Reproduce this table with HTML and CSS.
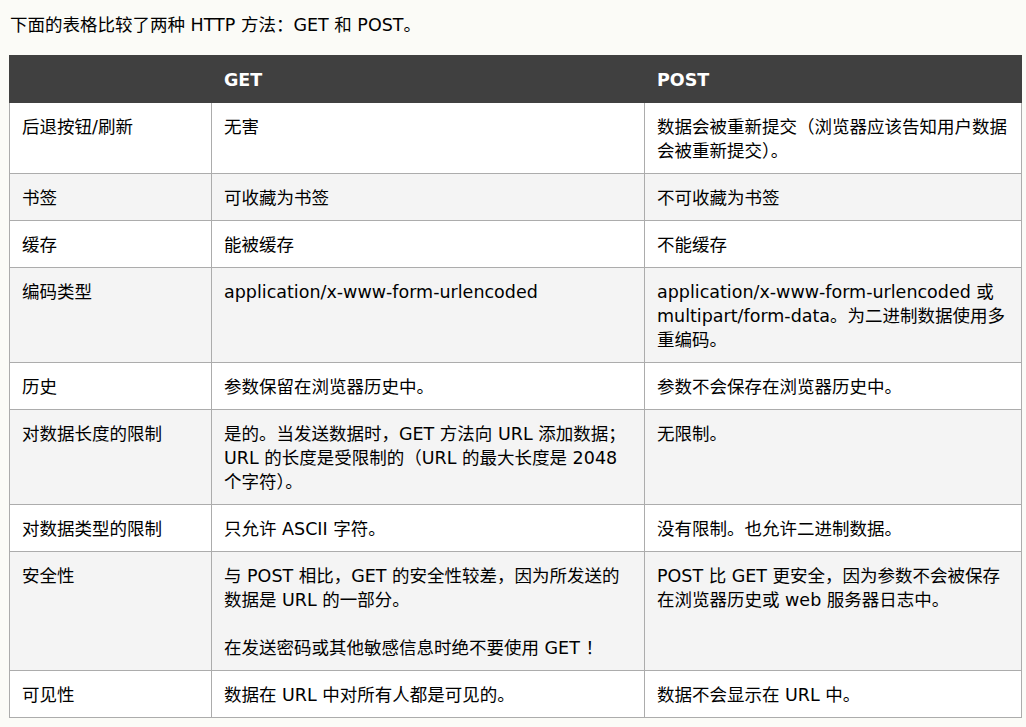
FILE: index.html
```html
<!DOCTYPE html>
<html lang="zh-CN">
<head>
<meta charset="utf-8">
<title>GET 对比 POST</title>
<link rel="stylesheet" href="styles.css">
</head>
<body>
<main class="page">
  <p class="intro">下面的表格比较了两种 HTTP 方法：GET 和 POST。</p>
  <table class="compare">
    <colgroup>
      <col class="c-name">
      <col class="c-get">
      <col class="c-post">
    </colgroup>
    <thead>
      <tr><th></th><th>GET</th><th>POST</th></tr>
    </thead>
    <tbody>
      <tr><td>后退按钮/刷新</td><td>无害</td><td>数据会被重新提交（浏览器应该告知用户数据会被重新提交）。</td></tr>
      <tr><td>书签</td><td>可收藏为书签</td><td>不可收藏为书签</td></tr>
      <tr><td>缓存</td><td>能被缓存</td><td>不能缓存</td></tr>
      <tr><td>编码类型</td><td>application/x-www-form-urlencoded</td><td>application/x-www-form-urlencoded 或 multipart/form-data。为二进制数据使用多重编码。</td></tr>
      <tr><td>历史</td><td>参数保留在浏览器历史中。</td><td>参数不会保存在浏览器历史中。</td></tr>
      <tr><td>对数据长度的限制</td><td>是的。当发送数据时，GET 方法向 URL 添加数据；URL 的长度是受限制的（URL 的最大长度是 2048 个字符）。</td><td>无限制。</td></tr>
      <tr><td>对数据类型的限制</td><td>只允许 ASCII 字符。</td><td>没有限制。也允许二进制数据。</td></tr>
      <tr><td>安全性</td><td><p class="cell-p">与 POST 相比，GET 的安全性较差，因为所发送的数据是 URL 的一部分。</p><p class="cell-p">在发送密码或其他敏感信息时绝不要使用 GET ！</p></td><td>POST 比 GET 更安全，因为参数不会被保存在浏览器历史或 web 服务器日志中。</td></tr>
      <tr><td>可见性</td><td>数据在 URL 中对所有人都是可见的。</td><td>数据不会显示在 URL 中。</td></tr>
    </tbody>
  </table>
</main>
</body>
</html>
```

FILE: styles.css
```css
html, body {
  margin: 0;
  padding: 0;
  background: #fbfbf7;
}

body {
  font-family: "DejaVu Sans", "Noto Sans CJK SC", sans-serif;
  font-size: 17.5px;
  line-height: 24px;
  color: #000;
}

.page {
  padding: 13px 5px 0 9px;
}

.intro {
  margin: 0 0 18px 1px;
}

.compare {
  border-collapse: collapse;
  table-layout: fixed;
  width: 1012px;
}

.c-name { width: 202px; }
.c-get { width: 433px; }
.c-post { width: 377px; }

.compare th,
.compare td {
  text-align: left;
  vertical-align: top;
  padding: 12px 12px 10px 12px;
}

.compare th {
  background: #404040;
  color: #fff;
  font-weight: bold;
  border: 1px solid #404040;
}

.compare td {
  border: 1px solid #acacac;
}

.compare tbody tr:nth-child(odd) td {
  background: #fff;
}

.compare tbody tr:nth-child(even) td {
  background: #f4f4f4;
}

.cell-p {
  margin: 0 0 24px 0;
}

.cell-p:last-child {
  margin-bottom: 0;
}
```
